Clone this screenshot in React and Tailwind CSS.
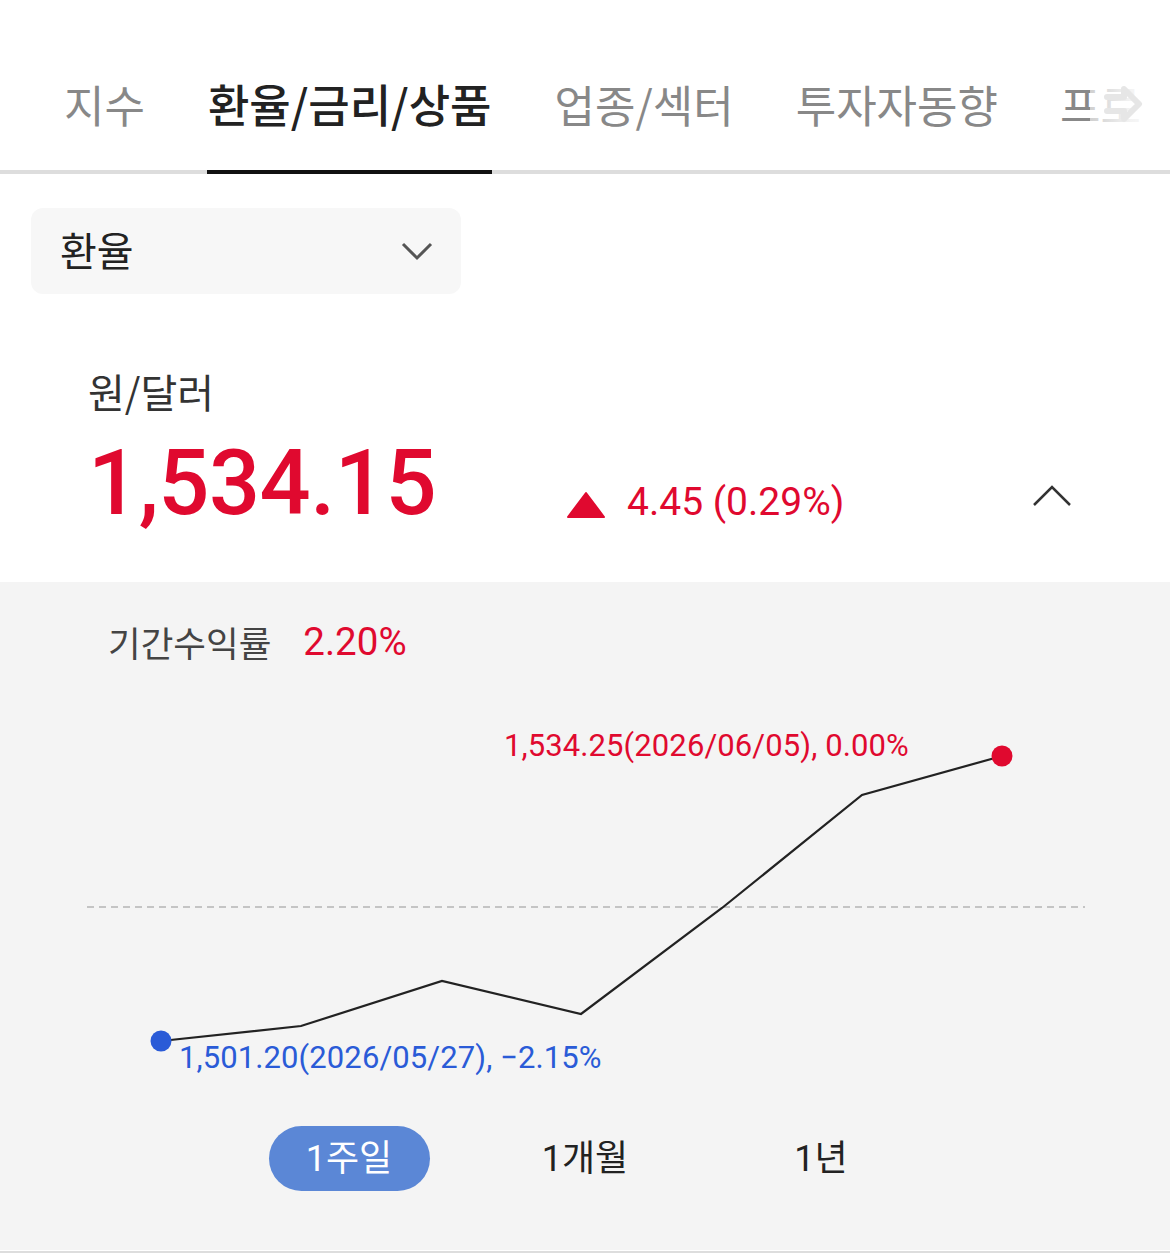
import React from "react";

const FONT = { fontFamily: 'Roboto, "Noto Sans CJK KR", sans-serif' };
const KFONT = { fontFamily: '"Noto Sans CJK KR", Roboto, sans-serif' };

function Chart() {
  const pts = [
    [161, 1041],
    [301, 1026],
    [442, 981],
    [581, 1014],
    [722, 908],
    [862, 795],
    [1002, 756],
  ];
  const top = 690;
  const d = pts.map(([x, y], i) => `${i ? "L" : "M"}${x} ${y - top}`).join(" ");
  return (
    <div className="relative h-[410px] w-full">
      <svg className="absolute left-0 top-0" width="1170" height="410" viewBox="0 0 1170 410">
        <line x1="87" y1={907 - top} x2="1085" y2={907 - top} stroke="#c4c4c4" strokeWidth="2" strokeDasharray="7 5" />
        <path d={d} fill="none" stroke="#222222" strokeWidth="2.2" strokeLinejoin="miter" />
        <circle cx="161" cy={1041 - top} r="10.5" fill="#2a5bd7" />
        <circle cx="1002" cy={756 - top} r="10.5" fill="#e0092f" />
      </svg>
      <div className="absolute left-[504px] top-[36px] text-[31px] leading-[40px] text-[#e0092f] whitespace-nowrap tracking-[0.1px]" style={FONT}>
        1,534.25(2026/06/05), 0.00%
      </div>
      <div className="absolute left-[179px] top-[348px] text-[31px] leading-[40px] text-[#2a5bd7] whitespace-nowrap tracking-[0.1px]" style={FONT}>
        1,501.20(2026/05/27), −2.15%
      </div>
    </div>
  );
}

export default function App() {
  const tabs = ["지수", "환율/금리/상품", "업종/섹터", "투자자동향", "프로"];
  return (
    <div className="w-[1170px] h-[1253px] bg-white overflow-hidden" style={FONT}>
      {/* Tabs */}
      <div className="relative h-[174px] border-b-4 border-[#dddddd]">
        <div className="flex h-[174px] items-stretch gap-[62px] pl-[64px] whitespace-nowrap overflow-hidden -mb-[4px]">
          {tabs.map((t, i) => (
            <div
              key={t}
              className={
                i === 1
                  ? "flex items-center pt-[38px] text-[45px] font-medium text-[#222222] border-b-4 border-[#111111] px-[1px]"
                  : "flex items-center pt-[38px] text-[44px] text-[#888888] border-b-4 border-transparent"
              }
              style={KFONT}
            >
              {t}
            </div>
          ))}
        </div>
        <div className="absolute right-0 top-0 h-[170px] w-[80px] bg-gradient-to-r from-white/60 via-white/90 to-white flex items-center justify-end pr-[26px]">
          <svg width="40" height="38" viewBox="0 0 40 38" className="mt-[38px]">
            <path d="M3 12 H20 V4 L35 19 L20 34 V26 H3" fill="none" stroke="#e6e6e6" strokeWidth="6" strokeLinejoin="round" strokeLinecap="round" />
          </svg>
        </div>
      </div>

      {/* Dropdown */}
      <div className="px-[31px] pt-[34px]">
        <div className="flex h-[86px] w-[430px] items-center justify-between rounded-[12px] bg-[#f7f7f7] pl-[29px] pr-[28px]">
          <span className="text-[40px] text-[#222222] -mt-[4px]" style={KFONT}>환율</span>
          <svg width="32" height="20" viewBox="0 0 32 20">
            <path d="M2 3 L16 17 L30 3" fill="none" stroke="#555555" strokeWidth="3" />
          </svg>
        </div>
      </div>

      {/* Price */}
      <div className="px-[88px] pt-[72px] h-[288px]">
        <div className="text-[40px] leading-[50px] text-[#333333]" style={KFONT}>원/달러</div>
        <div className="mt-[23px] flex items-end">
          <div className="text-[90px] leading-[90px] font-medium text-[#e0092f] tracking-[-0.5px]">1,534.15</div>
          <div className="ml-[130px] mb-[2px] flex items-center">
            <svg width="40" height="28" viewBox="0 0 40 28" className="mt-[6px]">
              <path d="M20 2 L38 26 H2 Z" fill="#e0092f" stroke="#e0092f" strokeWidth="2" strokeLinejoin="round" />
            </svg>
            <span className="ml-[21px] text-[39px] leading-[50px] text-[#e0092f]">4.45 (0.29%)</span>
          </div>
          <div className="ml-auto mr-[10px] mb-[22px]">
            <svg width="40" height="22" viewBox="0 0 40 22">
              <path d="M2 20 L20 2 L38 20" fill="none" stroke="#333333" strokeWidth="2.5" />
            </svg>
          </div>
        </div>
      </div>

      {/* Chart section */}
      <div className="bg-[#f4f4f4] h-[668px]">
        <div className="flex pl-[108px] pt-[38px] h-[108px] items-start">
          <span className="text-[35.5px] leading-[44px] text-[#444444]" style={KFONT}>기간수익률</span>
          <span className="ml-[32px] text-[38.5px] leading-[44px] text-[#e0092f]">2.20%</span>
        </div>
        <Chart />
        <div className="flex justify-center pt-[26px]">
          {["1주일", "1개월", "1년"].map((t, i) => (
            <div key={t} className="w-[236px] flex justify-center">
              <div
                className={
                  i === 0
                    ? "flex h-[65px] w-[161px] items-center justify-center rounded-full bg-[#5b87d6] text-[36px] text-white"
                    : "flex h-[65px] items-center justify-center text-[36px] text-[#222222]"
                }
              >
                {t}
              </div>
            </div>
          ))}
        </div>
      </div>
      <div className="mt-[1px] h-[2px] bg-[#dddddd]" />
    </div>
  );
}
